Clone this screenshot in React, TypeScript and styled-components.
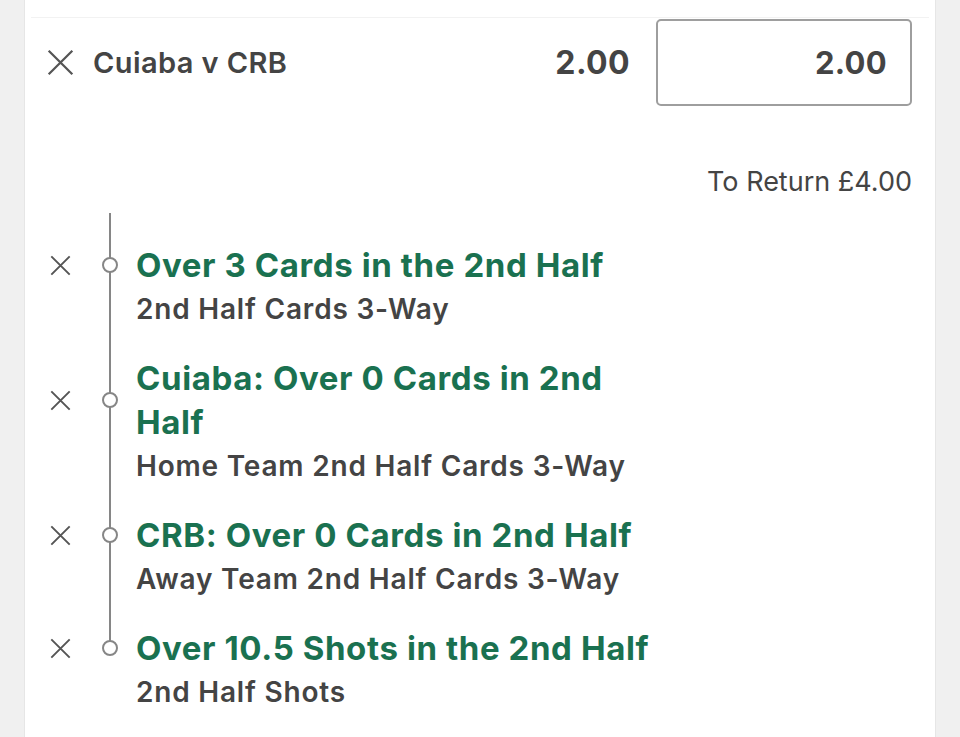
import styled, { createGlobalStyle } from 'styled-components';

const GlobalStyle = createGlobalStyle`
  html, body {
    margin: 0;
    padding: 0;
    background: #f0f0f0;
  }
  body {
    font-family: Inter, 'Noto Sans', 'Liberation Sans', sans-serif;
    -webkit-font-smoothing: antialiased;
  }
`;

interface Leg {
  title: string;
  market: string;
}

const legs: Leg[] = [
  { title: 'Over 3 Cards in the 2nd Half', market: '2nd Half Cards 3-Way' },
  { title: 'Cuiaba: Over 0 Cards in 2nd Half', market: 'Home Team 2nd Half Cards 3-Way' },
  { title: 'CRB: Over 0 Cards in 2nd Half', market: 'Away Team 2nd Half Cards 3-Way' },
  { title: 'Over 10.5 Shots in the 2nd Half', market: '2nd Half Shots' },
];

// thin two-stroke cross used for removing a selection
const CrossIcon = ({ size, stroke }: { size: number; stroke: number }) => (
  <svg width={size} height={size} viewBox="0 0 24 24" fill="none">
    <path d="M1.5 1.5 L22.5 22.5 M22.5 1.5 L1.5 22.5" stroke="#555" strokeWidth={stroke} />
  </svg>
);

const App = () => (
  <>
    <GlobalStyle />
    <Page>
      <Card>
        <TopRule />
        <Header>
          <RemoveBtn>
            <CrossIcon size={27} stroke={2} />
          </RemoveBtn>
          <EventName>Cuiaba v CRB</EventName>
          <Odds>2.00</Odds>
          <StakeBox>2.00</StakeBox>
        </Header>
        <Returns>To Return £4.00</Returns>
        <LegList>
          {legs.map((leg, i) => (
            <LegRow key={leg.title} $first={i === 0} $last={i === legs.length - 1}>
              <LegRemove>
                <CrossIcon size={21} stroke={2.2} />
              </LegRemove>
              <Node />
              <LegTitle>{leg.title}</LegTitle>
              <LegMarket>{leg.market}</LegMarket>
            </LegRow>
          ))}
        </LegList>
      </Card>
    </Page>
  </>
);

export default App;

const Page = styled.div`
  min-height: 737px;
  display: flex;
  padding: 0 24px;
`;

const Card = styled.div`
  flex: 1;
  background: #fff;
  border-left: 1px solid #e6e6e6;
  border-right: 1px solid #e6e6e6;
  min-height: 737px;
  padding-top: 17px;
  box-sizing: border-box;
`;

const TopRule = styled.div`
  height: 1px;
  margin: 0 6px;
  background: #f2f2f2;
`;

const Header = styled.div`
  display: flex;
  align-items: center;
  padding: 1px 23px 0 22px;
`;

const RemoveBtn = styled.button`
  width: 27px;
  height: 27px;
  padding: 0;
  border: none;
  background: transparent;
  display: flex;
  align-items: center;
  justify-content: center;
  flex-shrink: 0;
`;

const EventName = styled.div`
  margin-left: 19px;
  flex: 1;
  font-size: 29px;
  font-weight: 600;
  color: #444;
  letter-spacing: 0.4px;
`;

const Odds = styled.div`
  font-size: 32px;
  font-weight: 700;
  color: #444;
  margin-right: 26px;
  letter-spacing: 0.4px;
`;

const StakeBox = styled.div`
  width: 256px;
  height: 87px;
  border: 2px solid #9e9e9e;
  border-radius: 5px;
  display: flex;
  align-items: center;
  justify-content: flex-end;
  padding-right: 23px;
  box-sizing: border-box;
  font-size: 31px;
  font-weight: 700;
  color: #444;
  letter-spacing: 0.3px;
`;

const Returns = styled.div`
  text-align: right;
  padding: 60px 23px 0 0;
  font-size: 27px;
  line-height: 32px;
  color: #444;
`;

const LegList = styled.div`
  padding: 15px 0 0 23px;
`;

const LegRow = styled.div<{ $first: boolean; $last: boolean }>`
  position: relative;
  display: grid;
  grid-template-columns: 50px 38px 524px;
  grid-template-rows: auto auto;
  padding-top: ${p => (p.$first ? 30 : 25)}px;
  &::before {
    content: '';
    position: absolute;
    left: 61px;
    width: 2px;
    top: 0;
    ${p => (p.$last ? 'height: 47px;' : 'bottom: 0;')}
    background: #868686;
  }
`;

const LegRemove = styled.button`
  grid-column: 1;
  grid-row: 1;
  align-self: center;
  width: 24px;
  height: 24px;
  padding: 0;
  border: none;
  background: transparent;
  display: flex;
  align-items: center;
  justify-content: center;
`;

const Node = styled.div`
  position: relative;
  grid-column: 2;
  grid-row: 1;
  align-self: center;
  width: 16px;
  height: 16px;
  margin-left: 4px;
  border: 2px solid #868686;
  border-radius: 50%;
  background: #fff;
  box-sizing: border-box;
`;

const LegTitle = styled.div`
  grid-column: 3;
  grid-row: 1;
  font-size: 33px;
  line-height: 44px;
  font-weight: 700;
  color: #1a7150;
  letter-spacing: 0.6px;
`;

const LegMarket = styled.div`
  grid-column: 3;
  grid-row: 2;
  font-size: 28px;
  line-height: 44px;
  font-weight: 600;
  color: #444;
  letter-spacing: 0.8px;
`;
